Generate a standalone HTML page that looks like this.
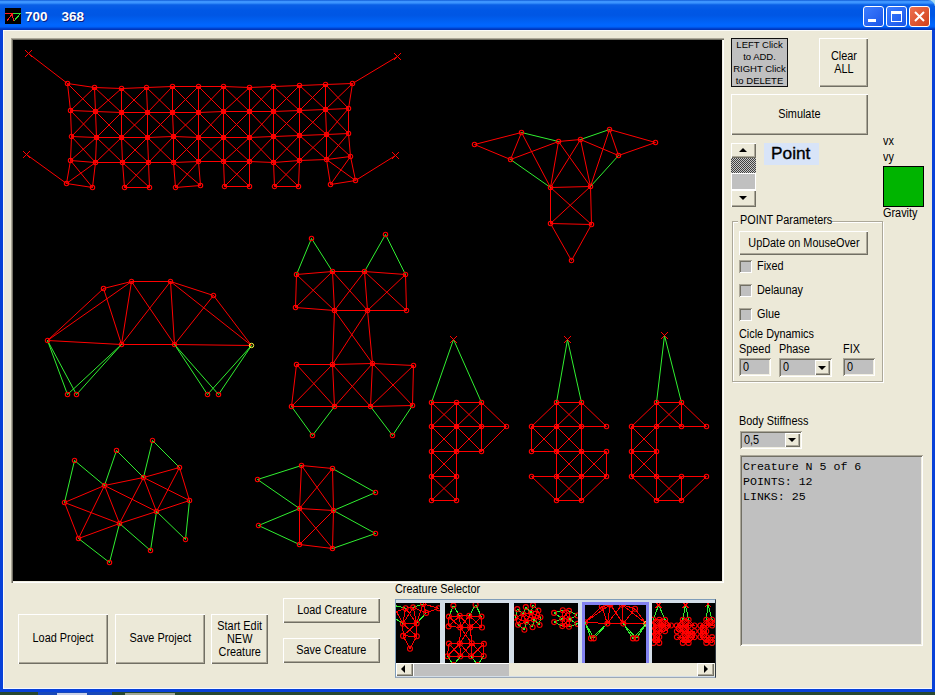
<!DOCTYPE html>
<html><head><meta charset="utf-8">
<style>
*{margin:0;padding:0;box-sizing:border-box}
html,body{width:935px;height:695px;overflow:hidden;background:#27472f}
body{position:relative;font-family:"Liberation Sans",sans-serif;font-size:12px;color:#000}
.a{position:absolute}
#win{left:0;top:0;width:935px;height:692px;background:#0841d8;border-radius:0 7px 0 0}
#title{left:0;top:0;width:935px;height:30px;border-radius:0 7px 0 0;
background:linear-gradient(to bottom,#0047c8 0px,#3d95ff 1px,#3d95ff 3px,#1a74f0 4px,#0a5fe6 5px,#0058e6 10px,#0056e4 15px,#005ff0 20px,#0066ff 25px,#0062f8 27px,#0048d8 28px,#0030b0 30px)}
#ttxt{left:25px;top:9px;color:#fff;font-weight:bold;font-size:13.5px;line-height:15px;text-shadow:1px 1px #0a1e80;white-space:nowrap}
#client{left:3px;top:30px;width:929px;height:659px;background:#ECE9D8;border-top:1px solid #fbfbf8;border-left:1px solid #fbfbf8;border-bottom:1px solid #f5f8ff}
.btn{position:absolute;background:#ECE9D8;box-shadow:inset 1px 1px #fff,inset -1px -1px #716F64,inset -2px -2px #ACA899;display:flex;align-items:center;justify-content:center;text-align:center;line-height:13px;font-size:12.5px;padding-bottom:1px}
.btn span{display:inline-block;transform:scaleX(.87);white-space:nowrap}
.tb{position:absolute;width:21px;height:21px;border-radius:3px;border:1px solid #fff}
.lbl{position:absolute;white-space:nowrap;font-size:12.5px;line-height:14px;transform:scaleX(.87);transform-origin:0 0}
.chk{position:absolute;width:13px;height:13px;background:#c0c0c0;box-shadow:inset 1px 1px #ACA899,inset -1px -1px #fff,inset 2px 2px #716F64}
.txt{position:absolute;background:#c0c0c0;box-shadow:inset 1px 1px #ACA899,inset -1px -1px #fff,inset 2px 2px #716F64,inset -2px -2px #F1EFE2;font-size:12.5px;padding:3px 0 0 4px;line-height:13px}
.txt span{display:inline-block;transform:scaleX(.87);transform-origin:0 0}
.arr{position:absolute;width:0;height:0;border-left:4px solid transparent;border-right:4px solid transparent}
</style></head><body>
<div class="a" style="left:38px;top:692px;width:74px;height:3px;background:#1848b8"></div><div class="a" style="left:57px;top:693px;width:30px;height:2px;background:#c8d0e8"></div><div class="a" style="left:125px;top:693px;width:50px;height:2px;background:#a0a898"></div>
<div id="win" class="a"></div>
<div class="a" style="left:928px;top:0;width:7px;height:6px;background:#a8dcf0"></div>
<div id="title" class="a"></div>
<svg class="a" style="left:5px;top:8px" width="16" height="16" viewBox="0 0 16 16" shape-rendering="crispEdges"><rect width="16" height="16" fill="#000"/><path d="M0 5.5H8M1.5 13.5L7.5 5.5L8.5 13.5" stroke="#ff2020" stroke-width="1" fill="none"/><path d="M8 5.5H15.5L8.5 13.5" stroke="#30e030" stroke-width="1" fill="none"/></svg>
<div id="ttxt" class="a">700<span style="display:inline-block;width:14px"></span>368</div>
<div class="tb a" style="left:863px;top:6px;background:linear-gradient(135deg,#3c7dff,#1a55e8)"><div class="a" style="left:4px;top:12px;width:8px;height:3px;background:#fff"></div></div>
<div class="tb a" style="left:886px;top:6px;background:linear-gradient(135deg,#3c7dff,#1a55e8)"><div class="a" style="left:4px;top:4px;width:11px;height:11px;border:1px solid #fff;border-top:3px solid #fff"></div></div>
<div class="tb a" style="left:909px;top:6px;background:linear-gradient(135deg,#ee7050,#d0401a)"><svg class="a" style="left:3px;top:3px" width="13" height="13"><path d="M2 2 L11 11 M11 2 L2 11" stroke="#fff" stroke-width="2"/></svg></div>
<div id="client" class="a"></div>

<!-- canvas -->
<div class="a" style="left:11px;top:38px;width:713px;height:545px;background:#000;box-shadow:inset 1px 1px #ACA899,inset 2px 2px #716F64,inset -1px -1px #fff,inset -2px -2px #F1EFE2"></div>
<svg class="a" id="cv" style="left:13px;top:40px" width="709" height="541" viewBox="13 40 709 541" shape-rendering="auto"><!--MAIN-->
<path d="M67.5 83.5L94.5 87.5M94.5 87.5L121.5 88.5M121.5 88.5L146.5 87.5M146.5 87.5L172.5 86.5M172.5 86.5L198.5 86.5M198.5 86.5L223.5 86.5M223.5 86.5L249.5 87.5M249.5 87.5L273.5 86.5M273.5 86.5L299.5 85.5M299.5 85.5L325.5 84.5M325.5 84.5L352.5 83.5M70.5 110.5L95.5 111.5M95.5 111.5L121.5 112.5M121.5 112.5L147.5 112.5M147.5 112.5L172.5 112.5M172.5 112.5L198.5 112.5M198.5 112.5L223.5 111.5M223.5 111.5L249.5 111.5M249.5 111.5L273.5 111.5M273.5 111.5L299.5 110.5M299.5 110.5L325.5 109.5M325.5 109.5L348.5 108.5M71.5 136.5L96.5 137.5M96.5 137.5L121.5 137.5M121.5 137.5L147.5 137.5M147.5 137.5L173.5 136.5M173.5 136.5L198.5 137.5M198.5 137.5L223.5 137.5M223.5 137.5L249.5 137.5M249.5 137.5L273.5 136.5M273.5 136.5L299.5 135.5M299.5 135.5L326.5 134.5M326.5 134.5L348.5 133.5M70.5 160.5L95.5 162.5M95.5 162.5L122.5 162.5M122.5 162.5L148.5 162.5M148.5 162.5L173.5 162.5M173.5 162.5L198.5 161.5M198.5 161.5L223.5 161.5M223.5 161.5L249.5 161.5M249.5 161.5L273.5 162.5M273.5 162.5L299.5 160.5M299.5 160.5L326.5 159.5M326.5 159.5L350.5 156.5M67.5 83.5L70.5 110.5M94.5 87.5L95.5 111.5M121.5 88.5L121.5 112.5M146.5 87.5L147.5 112.5M172.5 86.5L172.5 112.5M198.5 86.5L198.5 112.5M223.5 86.5L223.5 111.5M249.5 87.5L249.5 111.5M273.5 86.5L273.5 111.5M299.5 85.5L299.5 110.5M325.5 84.5L325.5 109.5M352.5 83.5L348.5 108.5M67.5 83.5L95.5 111.5M94.5 87.5L70.5 110.5M94.5 87.5L121.5 112.5M121.5 88.5L95.5 111.5M121.5 88.5L147.5 112.5M146.5 87.5L121.5 112.5M146.5 87.5L172.5 112.5M172.5 86.5L147.5 112.5M172.5 86.5L198.5 112.5M198.5 86.5L172.5 112.5M198.5 86.5L223.5 111.5M223.5 86.5L198.5 112.5M223.5 86.5L249.5 111.5M249.5 87.5L223.5 111.5M249.5 87.5L273.5 111.5M273.5 86.5L249.5 111.5M273.5 86.5L299.5 110.5M299.5 85.5L273.5 111.5M299.5 85.5L325.5 109.5M325.5 84.5L299.5 110.5M325.5 84.5L348.5 108.5M352.5 83.5L325.5 109.5M70.5 110.5L71.5 136.5M95.5 111.5L96.5 137.5M121.5 112.5L121.5 137.5M147.5 112.5L147.5 137.5M172.5 112.5L173.5 136.5M198.5 112.5L198.5 137.5M223.5 111.5L223.5 137.5M249.5 111.5L249.5 137.5M273.5 111.5L273.5 136.5M299.5 110.5L299.5 135.5M325.5 109.5L326.5 134.5M348.5 108.5L348.5 133.5M70.5 110.5L96.5 137.5M95.5 111.5L71.5 136.5M95.5 111.5L121.5 137.5M121.5 112.5L96.5 137.5M121.5 112.5L147.5 137.5M147.5 112.5L121.5 137.5M147.5 112.5L173.5 136.5M172.5 112.5L147.5 137.5M172.5 112.5L198.5 137.5M198.5 112.5L173.5 136.5M198.5 112.5L223.5 137.5M223.5 111.5L198.5 137.5M223.5 111.5L249.5 137.5M249.5 111.5L223.5 137.5M249.5 111.5L273.5 136.5M273.5 111.5L249.5 137.5M273.5 111.5L299.5 135.5M299.5 110.5L273.5 136.5M299.5 110.5L326.5 134.5M325.5 109.5L299.5 135.5M325.5 109.5L348.5 133.5M348.5 108.5L326.5 134.5M71.5 136.5L70.5 160.5M96.5 137.5L95.5 162.5M121.5 137.5L122.5 162.5M147.5 137.5L148.5 162.5M173.5 136.5L173.5 162.5M198.5 137.5L198.5 161.5M223.5 137.5L223.5 161.5M249.5 137.5L249.5 161.5M273.5 136.5L273.5 162.5M299.5 135.5L299.5 160.5M326.5 134.5L326.5 159.5M348.5 133.5L350.5 156.5M71.5 136.5L95.5 162.5M96.5 137.5L70.5 160.5M96.5 137.5L122.5 162.5M121.5 137.5L95.5 162.5M121.5 137.5L148.5 162.5M147.5 137.5L122.5 162.5M147.5 137.5L173.5 162.5M173.5 136.5L148.5 162.5M173.5 136.5L198.5 161.5M198.5 137.5L173.5 162.5M198.5 137.5L223.5 161.5M223.5 137.5L198.5 161.5M223.5 137.5L249.5 161.5M249.5 137.5L223.5 161.5M249.5 137.5L273.5 162.5M273.5 136.5L249.5 161.5M273.5 136.5L299.5 160.5M299.5 135.5L273.5 162.5M299.5 135.5L326.5 159.5M326.5 134.5L299.5 160.5M326.5 134.5L350.5 156.5M348.5 133.5L326.5 159.5M70.5 160.5L66.5 183.5M95.5 162.5L92.5 187.5M66.5 183.5L92.5 187.5M70.5 160.5L92.5 187.5M95.5 162.5L66.5 183.5M122.5 162.5L124.5 187.5M148.5 162.5L149.5 187.5M124.5 187.5L149.5 187.5M122.5 162.5L149.5 187.5M148.5 162.5L124.5 187.5M173.5 162.5L175.5 187.5M198.5 161.5L200.5 185.5M175.5 187.5L200.5 185.5M173.5 162.5L200.5 185.5M198.5 161.5L175.5 187.5M223.5 161.5L224.5 186.5M249.5 161.5L249.5 186.5M224.5 186.5L249.5 186.5M223.5 161.5L249.5 186.5M249.5 161.5L224.5 186.5M273.5 162.5L274.5 186.5M299.5 160.5L298.5 186.5M274.5 186.5L298.5 186.5M273.5 162.5L298.5 186.5M299.5 160.5L274.5 186.5M326.5 159.5L330.5 184.5M350.5 156.5L355.5 180.5M330.5 184.5L355.5 180.5M326.5 159.5L355.5 180.5M350.5 156.5L330.5 184.5M28.5 53.5L67.5 83.5M26.5 154.5L66.5 183.5M397.5 56.5L352.5 83.5M395.5 155.5L355.5 180.5" stroke="#ff0000" stroke-width="1" fill="none"/>
<path d="M65.3 83.5a2.2 2.2 0 1 0 4.4 0a2.2 2.2 0 1 0 -4.4 0M68.3 110.5a2.2 2.2 0 1 0 4.4 0a2.2 2.2 0 1 0 -4.4 0M69.3 136.5a2.2 2.2 0 1 0 4.4 0a2.2 2.2 0 1 0 -4.4 0M68.3 160.5a2.2 2.2 0 1 0 4.4 0a2.2 2.2 0 1 0 -4.4 0M64.3 183.5a2.2 2.2 0 1 0 4.4 0a2.2 2.2 0 1 0 -4.4 0M92.3 87.5a2.2 2.2 0 1 0 4.4 0a2.2 2.2 0 1 0 -4.4 0M93.3 111.5a2.2 2.2 0 1 0 4.4 0a2.2 2.2 0 1 0 -4.4 0M94.3 137.5a2.2 2.2 0 1 0 4.4 0a2.2 2.2 0 1 0 -4.4 0M93.3 162.5a2.2 2.2 0 1 0 4.4 0a2.2 2.2 0 1 0 -4.4 0M90.3 187.5a2.2 2.2 0 1 0 4.4 0a2.2 2.2 0 1 0 -4.4 0M119.3 88.5a2.2 2.2 0 1 0 4.4 0a2.2 2.2 0 1 0 -4.4 0M119.3 112.5a2.2 2.2 0 1 0 4.4 0a2.2 2.2 0 1 0 -4.4 0M119.3 137.5a2.2 2.2 0 1 0 4.4 0a2.2 2.2 0 1 0 -4.4 0M120.3 162.5a2.2 2.2 0 1 0 4.4 0a2.2 2.2 0 1 0 -4.4 0M122.3 187.5a2.2 2.2 0 1 0 4.4 0a2.2 2.2 0 1 0 -4.4 0M144.3 87.5a2.2 2.2 0 1 0 4.4 0a2.2 2.2 0 1 0 -4.4 0M145.3 112.5a2.2 2.2 0 1 0 4.4 0a2.2 2.2 0 1 0 -4.4 0M145.3 137.5a2.2 2.2 0 1 0 4.4 0a2.2 2.2 0 1 0 -4.4 0M146.3 162.5a2.2 2.2 0 1 0 4.4 0a2.2 2.2 0 1 0 -4.4 0M147.3 187.5a2.2 2.2 0 1 0 4.4 0a2.2 2.2 0 1 0 -4.4 0M170.3 86.5a2.2 2.2 0 1 0 4.4 0a2.2 2.2 0 1 0 -4.4 0M170.3 112.5a2.2 2.2 0 1 0 4.4 0a2.2 2.2 0 1 0 -4.4 0M171.3 136.5a2.2 2.2 0 1 0 4.4 0a2.2 2.2 0 1 0 -4.4 0M171.3 162.5a2.2 2.2 0 1 0 4.4 0a2.2 2.2 0 1 0 -4.4 0M173.3 187.5a2.2 2.2 0 1 0 4.4 0a2.2 2.2 0 1 0 -4.4 0M196.3 86.5a2.2 2.2 0 1 0 4.4 0a2.2 2.2 0 1 0 -4.4 0M196.3 112.5a2.2 2.2 0 1 0 4.4 0a2.2 2.2 0 1 0 -4.4 0M196.3 137.5a2.2 2.2 0 1 0 4.4 0a2.2 2.2 0 1 0 -4.4 0M196.3 161.5a2.2 2.2 0 1 0 4.4 0a2.2 2.2 0 1 0 -4.4 0M198.3 185.5a2.2 2.2 0 1 0 4.4 0a2.2 2.2 0 1 0 -4.4 0M221.3 86.5a2.2 2.2 0 1 0 4.4 0a2.2 2.2 0 1 0 -4.4 0M221.3 111.5a2.2 2.2 0 1 0 4.4 0a2.2 2.2 0 1 0 -4.4 0M221.3 137.5a2.2 2.2 0 1 0 4.4 0a2.2 2.2 0 1 0 -4.4 0M221.3 161.5a2.2 2.2 0 1 0 4.4 0a2.2 2.2 0 1 0 -4.4 0M222.3 186.5a2.2 2.2 0 1 0 4.4 0a2.2 2.2 0 1 0 -4.4 0M247.3 87.5a2.2 2.2 0 1 0 4.4 0a2.2 2.2 0 1 0 -4.4 0M247.3 111.5a2.2 2.2 0 1 0 4.4 0a2.2 2.2 0 1 0 -4.4 0M247.3 137.5a2.2 2.2 0 1 0 4.4 0a2.2 2.2 0 1 0 -4.4 0M247.3 161.5a2.2 2.2 0 1 0 4.4 0a2.2 2.2 0 1 0 -4.4 0M247.3 186.5a2.2 2.2 0 1 0 4.4 0a2.2 2.2 0 1 0 -4.4 0M271.3 86.5a2.2 2.2 0 1 0 4.4 0a2.2 2.2 0 1 0 -4.4 0M271.3 111.5a2.2 2.2 0 1 0 4.4 0a2.2 2.2 0 1 0 -4.4 0M271.3 136.5a2.2 2.2 0 1 0 4.4 0a2.2 2.2 0 1 0 -4.4 0M271.3 162.5a2.2 2.2 0 1 0 4.4 0a2.2 2.2 0 1 0 -4.4 0M272.3 186.5a2.2 2.2 0 1 0 4.4 0a2.2 2.2 0 1 0 -4.4 0M297.3 85.5a2.2 2.2 0 1 0 4.4 0a2.2 2.2 0 1 0 -4.4 0M297.3 110.5a2.2 2.2 0 1 0 4.4 0a2.2 2.2 0 1 0 -4.4 0M297.3 135.5a2.2 2.2 0 1 0 4.4 0a2.2 2.2 0 1 0 -4.4 0M297.3 160.5a2.2 2.2 0 1 0 4.4 0a2.2 2.2 0 1 0 -4.4 0M296.3 186.5a2.2 2.2 0 1 0 4.4 0a2.2 2.2 0 1 0 -4.4 0M323.3 84.5a2.2 2.2 0 1 0 4.4 0a2.2 2.2 0 1 0 -4.4 0M323.3 109.5a2.2 2.2 0 1 0 4.4 0a2.2 2.2 0 1 0 -4.4 0M324.3 134.5a2.2 2.2 0 1 0 4.4 0a2.2 2.2 0 1 0 -4.4 0M324.3 159.5a2.2 2.2 0 1 0 4.4 0a2.2 2.2 0 1 0 -4.4 0M328.3 184.5a2.2 2.2 0 1 0 4.4 0a2.2 2.2 0 1 0 -4.4 0M350.3 83.5a2.2 2.2 0 1 0 4.4 0a2.2 2.2 0 1 0 -4.4 0M346.3 108.5a2.2 2.2 0 1 0 4.4 0a2.2 2.2 0 1 0 -4.4 0M346.3 133.5a2.2 2.2 0 1 0 4.4 0a2.2 2.2 0 1 0 -4.4 0M348.3 156.5a2.2 2.2 0 1 0 4.4 0a2.2 2.2 0 1 0 -4.4 0M353.3 180.5a2.2 2.2 0 1 0 4.4 0a2.2 2.2 0 1 0 -4.4 0" stroke="#ff0000" stroke-width="1.1" fill="none" shape-rendering="auto"/>
<path d="M25 50l7 7M25 57l7 -7M23 151l7 7M23 158l7 -7M394 53l7 7M394 60l7 -7M392 152l7 7M392 159l7 -7" stroke="#ff0000" stroke-width="1" fill="none"/>
<path d="M474.5 144.5L521.5 132.5M474.5 144.5L510.5 159.5M521.5 132.5L510.5 159.5M521.5 132.5L550.5 187.5M510.5 159.5L558.5 141.5M558.5 141.5L580.5 139.5M558.5 141.5L550.5 187.5M558.5 141.5L590.5 186.5M580.5 139.5L550.5 187.5M580.5 139.5L590.5 186.5M580.5 139.5L618.5 155.5M609.5 129.5L655.5 142.5M609.5 129.5L618.5 155.5M655.5 142.5L618.5 155.5M609.5 129.5L590.5 186.5M550.5 187.5L590.5 186.5M550.5 187.5L550.5 223.5M590.5 186.5L591.5 224.5M550.5 187.5L591.5 224.5M590.5 186.5L550.5 223.5M550.5 223.5L591.5 224.5M550.5 223.5L571.5 260.5M591.5 224.5L571.5 260.5" stroke="#ff0000" stroke-width="1" fill="none"/>
<path d="M521.5 132.5L558.5 141.5M510.5 159.5L550.5 187.5M580.5 139.5L609.5 129.5M618.5 155.5L590.5 186.5" stroke="#30f030" stroke-width="1" fill="none"/>
<path d="M472.3 144.5a2.2 2.2 0 1 0 4.4 0a2.2 2.2 0 1 0 -4.4 0M519.3 132.5a2.2 2.2 0 1 0 4.4 0a2.2 2.2 0 1 0 -4.4 0M508.3 159.5a2.2 2.2 0 1 0 4.4 0a2.2 2.2 0 1 0 -4.4 0M556.3 141.5a2.2 2.2 0 1 0 4.4 0a2.2 2.2 0 1 0 -4.4 0M578.3 139.5a2.2 2.2 0 1 0 4.4 0a2.2 2.2 0 1 0 -4.4 0M607.3 129.5a2.2 2.2 0 1 0 4.4 0a2.2 2.2 0 1 0 -4.4 0M653.3 142.5a2.2 2.2 0 1 0 4.4 0a2.2 2.2 0 1 0 -4.4 0M616.3 155.5a2.2 2.2 0 1 0 4.4 0a2.2 2.2 0 1 0 -4.4 0M548.3 187.5a2.2 2.2 0 1 0 4.4 0a2.2 2.2 0 1 0 -4.4 0M588.3 186.5a2.2 2.2 0 1 0 4.4 0a2.2 2.2 0 1 0 -4.4 0M548.3 223.5a2.2 2.2 0 1 0 4.4 0a2.2 2.2 0 1 0 -4.4 0M589.3 224.5a2.2 2.2 0 1 0 4.4 0a2.2 2.2 0 1 0 -4.4 0M569.3 260.5a2.2 2.2 0 1 0 4.4 0a2.2 2.2 0 1 0 -4.4 0" stroke="#ff0000" stroke-width="1.1" fill="none" shape-rendering="auto"/>
<path d="M47.5 340.5L103.5 288.5M47.5 340.5L131.5 281.5M103.5 288.5L131.5 281.5M103.5 288.5L121.5 344.5M131.5 281.5L170.5 281.5M131.5 281.5L121.5 344.5M131.5 281.5L174.5 344.5M170.5 281.5L121.5 344.5M170.5 281.5L174.5 344.5M170.5 281.5L213.5 295.5M170.5 281.5L251.5 345.5M213.5 295.5L174.5 344.5M213.5 295.5L251.5 345.5M47.5 340.5L121.5 344.5M121.5 344.5L174.5 344.5M174.5 344.5L251.5 345.5" stroke="#ff0000" stroke-width="1" fill="none"/>
<path d="M47.5 340.5L67.5 394.5M47.5 340.5L76.5 394.5M121.5 344.5L67.5 394.5M121.5 344.5L76.5 394.5M174.5 344.5L207.5 394.5M174.5 344.5L218.5 394.5M251.5 345.5L207.5 394.5M251.5 345.5L218.5 394.5" stroke="#30f030" stroke-width="1" fill="none"/>
<path d="M45.3 340.5a2.2 2.2 0 1 0 4.4 0a2.2 2.2 0 1 0 -4.4 0M101.3 288.5a2.2 2.2 0 1 0 4.4 0a2.2 2.2 0 1 0 -4.4 0M129.3 281.5a2.2 2.2 0 1 0 4.4 0a2.2 2.2 0 1 0 -4.4 0M168.3 281.5a2.2 2.2 0 1 0 4.4 0a2.2 2.2 0 1 0 -4.4 0M211.3 295.5a2.2 2.2 0 1 0 4.4 0a2.2 2.2 0 1 0 -4.4 0M119.3 344.5a2.2 2.2 0 1 0 4.4 0a2.2 2.2 0 1 0 -4.4 0M172.3 344.5a2.2 2.2 0 1 0 4.4 0a2.2 2.2 0 1 0 -4.4 0M65.3 394.5a2.2 2.2 0 1 0 4.4 0a2.2 2.2 0 1 0 -4.4 0M74.3 394.5a2.2 2.2 0 1 0 4.4 0a2.2 2.2 0 1 0 -4.4 0M205.3 394.5a2.2 2.2 0 1 0 4.4 0a2.2 2.2 0 1 0 -4.4 0M216.3 394.5a2.2 2.2 0 1 0 4.4 0a2.2 2.2 0 1 0 -4.4 0" stroke="#ff0000" stroke-width="1.1" fill="none" shape-rendering="auto"/>
<circle cx="251.5" cy="345.5" r="2.2" stroke="#ffff40" fill="none" shape-rendering="auto"/>
<path d="M296.5 274.5L332.5 271.5M332.5 271.5L364.5 271.5M364.5 271.5L405.5 274.5M296.5 274.5L295.5 307.5M332.5 271.5L334.5 310.5M364.5 271.5L367.5 310.5M405.5 274.5L406.5 310.5M295.5 307.5L334.5 310.5M334.5 310.5L367.5 310.5M367.5 310.5L406.5 310.5M296.5 274.5L334.5 310.5M332.5 271.5L295.5 307.5M332.5 271.5L367.5 310.5M364.5 271.5L334.5 310.5M364.5 271.5L406.5 310.5M405.5 274.5L367.5 310.5M334.5 310.5L332.5 364.5M367.5 310.5L372.5 363.5M334.5 310.5L372.5 363.5M367.5 310.5L332.5 364.5M296.5 364.5L332.5 364.5M332.5 364.5L372.5 363.5M372.5 363.5L413.5 365.5M296.5 364.5L291.5 406.5M332.5 364.5L334.5 406.5M372.5 363.5L370.5 406.5M413.5 365.5L412.5 405.5M291.5 406.5L334.5 406.5M334.5 406.5L370.5 406.5M370.5 406.5L412.5 405.5M296.5 364.5L334.5 406.5M332.5 364.5L291.5 406.5M332.5 364.5L370.5 406.5M372.5 363.5L334.5 406.5M372.5 363.5L412.5 405.5M413.5 365.5L370.5 406.5" stroke="#ff0000" stroke-width="1" fill="none"/>
<path d="M311.5 238.5L296.5 274.5M311.5 238.5L332.5 271.5M385.5 234.5L364.5 271.5M385.5 234.5L405.5 274.5M291.5 406.5L312.5 435.5M334.5 406.5L312.5 435.5M370.5 406.5L392.5 435.5M412.5 405.5L392.5 435.5" stroke="#30f030" stroke-width="1" fill="none"/>
<path d="M309.3 238.5a2.2 2.2 0 1 0 4.4 0a2.2 2.2 0 1 0 -4.4 0M383.3 234.5a2.2 2.2 0 1 0 4.4 0a2.2 2.2 0 1 0 -4.4 0M294.3 274.5a2.2 2.2 0 1 0 4.4 0a2.2 2.2 0 1 0 -4.4 0M330.3 271.5a2.2 2.2 0 1 0 4.4 0a2.2 2.2 0 1 0 -4.4 0M362.3 271.5a2.2 2.2 0 1 0 4.4 0a2.2 2.2 0 1 0 -4.4 0M403.3 274.5a2.2 2.2 0 1 0 4.4 0a2.2 2.2 0 1 0 -4.4 0M293.3 307.5a2.2 2.2 0 1 0 4.4 0a2.2 2.2 0 1 0 -4.4 0M332.3 310.5a2.2 2.2 0 1 0 4.4 0a2.2 2.2 0 1 0 -4.4 0M365.3 310.5a2.2 2.2 0 1 0 4.4 0a2.2 2.2 0 1 0 -4.4 0M404.3 310.5a2.2 2.2 0 1 0 4.4 0a2.2 2.2 0 1 0 -4.4 0M294.3 364.5a2.2 2.2 0 1 0 4.4 0a2.2 2.2 0 1 0 -4.4 0M330.3 364.5a2.2 2.2 0 1 0 4.4 0a2.2 2.2 0 1 0 -4.4 0M370.3 363.5a2.2 2.2 0 1 0 4.4 0a2.2 2.2 0 1 0 -4.4 0M411.3 365.5a2.2 2.2 0 1 0 4.4 0a2.2 2.2 0 1 0 -4.4 0M289.3 406.5a2.2 2.2 0 1 0 4.4 0a2.2 2.2 0 1 0 -4.4 0M332.3 406.5a2.2 2.2 0 1 0 4.4 0a2.2 2.2 0 1 0 -4.4 0M368.3 406.5a2.2 2.2 0 1 0 4.4 0a2.2 2.2 0 1 0 -4.4 0M410.3 405.5a2.2 2.2 0 1 0 4.4 0a2.2 2.2 0 1 0 -4.4 0M310.3 435.5a2.2 2.2 0 1 0 4.4 0a2.2 2.2 0 1 0 -4.4 0M390.3 435.5a2.2 2.2 0 1 0 4.4 0a2.2 2.2 0 1 0 -4.4 0" stroke="#ff0000" stroke-width="1.1" fill="none" shape-rendering="auto"/>
<path d="M64.5 502.5L104.5 485.5M104.5 485.5L143.5 477.5M143.5 477.5L179.5 467.5M179.5 467.5L189.5 500.5M189.5 500.5L156.5 511.5M156.5 511.5L119.5 523.5M119.5 523.5L78.5 538.5M78.5 538.5L64.5 502.5M64.5 502.5L119.5 523.5M104.5 485.5L78.5 538.5M104.5 485.5L119.5 523.5M104.5 485.5L156.5 511.5M143.5 477.5L119.5 523.5M143.5 477.5L156.5 511.5M143.5 477.5L189.5 500.5M179.5 467.5L156.5 511.5M301.5 465.5L332.5 468.5M301.5 465.5L299.5 508.5M332.5 468.5L333.5 510.5M299.5 508.5L333.5 510.5M299.5 508.5L299.5 544.5M333.5 510.5L332.5 548.5M299.5 544.5L332.5 548.5M301.5 465.5L333.5 510.5M332.5 468.5L299.5 508.5M299.5 508.5L332.5 548.5M333.5 510.5L299.5 544.5" stroke="#ff0000" stroke-width="1" fill="none"/>
<path d="M74.5 460.5L64.5 502.5M74.5 460.5L104.5 485.5M116.5 450.5L104.5 485.5M116.5 450.5L143.5 477.5M152.5 440.5L143.5 477.5M152.5 440.5L179.5 467.5M78.5 538.5L109.5 562.5M119.5 523.5L109.5 562.5M119.5 523.5L150.5 550.5M156.5 511.5L150.5 550.5M156.5 511.5L185.5 539.5M189.5 500.5L185.5 539.5M257.5 479.5L301.5 465.5M257.5 479.5L299.5 508.5M258.5 525.5L299.5 508.5M258.5 525.5L299.5 544.5M375.5 492.5L332.5 468.5M375.5 492.5L333.5 510.5M375.5 533.5L333.5 510.5M375.5 533.5L332.5 548.5" stroke="#30f030" stroke-width="1" fill="none"/>
<path d="M72.3 460.5a2.2 2.2 0 1 0 4.4 0a2.2 2.2 0 1 0 -4.4 0M114.3 450.5a2.2 2.2 0 1 0 4.4 0a2.2 2.2 0 1 0 -4.4 0M150.3 440.5a2.2 2.2 0 1 0 4.4 0a2.2 2.2 0 1 0 -4.4 0M62.3 502.5a2.2 2.2 0 1 0 4.4 0a2.2 2.2 0 1 0 -4.4 0M102.3 485.5a2.2 2.2 0 1 0 4.4 0a2.2 2.2 0 1 0 -4.4 0M141.3 477.5a2.2 2.2 0 1 0 4.4 0a2.2 2.2 0 1 0 -4.4 0M177.3 467.5a2.2 2.2 0 1 0 4.4 0a2.2 2.2 0 1 0 -4.4 0M187.3 500.5a2.2 2.2 0 1 0 4.4 0a2.2 2.2 0 1 0 -4.4 0M154.3 511.5a2.2 2.2 0 1 0 4.4 0a2.2 2.2 0 1 0 -4.4 0M117.3 523.5a2.2 2.2 0 1 0 4.4 0a2.2 2.2 0 1 0 -4.4 0M76.3 538.5a2.2 2.2 0 1 0 4.4 0a2.2 2.2 0 1 0 -4.4 0M107.3 562.5a2.2 2.2 0 1 0 4.4 0a2.2 2.2 0 1 0 -4.4 0M148.3 550.5a2.2 2.2 0 1 0 4.4 0a2.2 2.2 0 1 0 -4.4 0M183.3 539.5a2.2 2.2 0 1 0 4.4 0a2.2 2.2 0 1 0 -4.4 0M299.3 465.5a2.2 2.2 0 1 0 4.4 0a2.2 2.2 0 1 0 -4.4 0M330.3 468.5a2.2 2.2 0 1 0 4.4 0a2.2 2.2 0 1 0 -4.4 0M297.3 508.5a2.2 2.2 0 1 0 4.4 0a2.2 2.2 0 1 0 -4.4 0M331.3 510.5a2.2 2.2 0 1 0 4.4 0a2.2 2.2 0 1 0 -4.4 0M297.3 544.5a2.2 2.2 0 1 0 4.4 0a2.2 2.2 0 1 0 -4.4 0M330.3 548.5a2.2 2.2 0 1 0 4.4 0a2.2 2.2 0 1 0 -4.4 0M255.3 479.5a2.2 2.2 0 1 0 4.4 0a2.2 2.2 0 1 0 -4.4 0M256.3 525.5a2.2 2.2 0 1 0 4.4 0a2.2 2.2 0 1 0 -4.4 0M373.3 492.5a2.2 2.2 0 1 0 4.4 0a2.2 2.2 0 1 0 -4.4 0M373.3 533.5a2.2 2.2 0 1 0 4.4 0a2.2 2.2 0 1 0 -4.4 0" stroke="#ff0000" stroke-width="1.1" fill="none" shape-rendering="auto"/>
<path d="M431.5 402.5L456.5 402.5M431.5 426.5L456.5 426.5M431.5 402.5L431.5 426.5M456.5 402.5L456.5 426.5M431.5 402.5L456.5 426.5M456.5 402.5L431.5 426.5M456.5 402.5L481.5 402.5M456.5 426.5L481.5 426.5M456.5 402.5L456.5 426.5M481.5 402.5L481.5 426.5M456.5 402.5L481.5 426.5M481.5 402.5L456.5 426.5M431.5 426.5L456.5 426.5M431.5 451.5L456.5 451.5M431.5 426.5L431.5 451.5M456.5 426.5L456.5 451.5M431.5 426.5L456.5 451.5M456.5 426.5L431.5 451.5M456.5 426.5L481.5 426.5M456.5 451.5L481.5 451.5M456.5 426.5L456.5 451.5M481.5 426.5L481.5 451.5M456.5 426.5L481.5 451.5M481.5 426.5L456.5 451.5M431.5 451.5L456.5 451.5M431.5 476.5L456.5 476.5M431.5 451.5L431.5 476.5M456.5 451.5L456.5 476.5M431.5 451.5L456.5 476.5M456.5 451.5L431.5 476.5M431.5 476.5L456.5 476.5M431.5 500.5L456.5 500.5M431.5 476.5L431.5 500.5M456.5 476.5L456.5 500.5M431.5 476.5L456.5 500.5M456.5 476.5L431.5 500.5M481.5 402.5L506.5 426.5M481.5 426.5L506.5 426.5M481.5 451.5L506.5 426.5M556.5 402.5L581.5 402.5M556.5 426.5L581.5 426.5M556.5 402.5L556.5 426.5M581.5 402.5L581.5 426.5M556.5 402.5L581.5 426.5M581.5 402.5L556.5 426.5M531.5 426.5L556.5 426.5M531.5 451.5L556.5 451.5M531.5 426.5L531.5 451.5M556.5 426.5L556.5 451.5M531.5 426.5L556.5 451.5M556.5 426.5L531.5 451.5M556.5 426.5L581.5 426.5M556.5 451.5L581.5 451.5M556.5 426.5L556.5 451.5M581.5 426.5L581.5 451.5M556.5 426.5L581.5 451.5M581.5 426.5L556.5 451.5M581.5 426.5L606.5 426.5M556.5 451.5L581.5 451.5M556.5 476.5L581.5 476.5M556.5 451.5L556.5 476.5M581.5 451.5L581.5 476.5M556.5 451.5L581.5 476.5M581.5 451.5L556.5 476.5M581.5 451.5L606.5 451.5M581.5 476.5L606.5 476.5M606.5 451.5L606.5 476.5M581.5 451.5L606.5 476.5M606.5 451.5L581.5 476.5M556.5 476.5L581.5 476.5M556.5 500.5L581.5 500.5M556.5 476.5L556.5 500.5M581.5 476.5L581.5 500.5M556.5 476.5L581.5 500.5M581.5 476.5L556.5 500.5M531.5 476.5L556.5 476.5M531.5 426.5L556.5 402.5M606.5 426.5L581.5 402.5M531.5 476.5L556.5 500.5M606.5 476.5L581.5 500.5M656.5 402.5L681.5 402.5M656.5 426.5L681.5 426.5M656.5 402.5L656.5 426.5M681.5 402.5L681.5 426.5M656.5 402.5L681.5 426.5M681.5 402.5L656.5 426.5M631.5 426.5L656.5 426.5M631.5 451.5L656.5 451.5M631.5 426.5L631.5 451.5M656.5 426.5L656.5 451.5M631.5 426.5L656.5 451.5M656.5 426.5L631.5 451.5M656.5 426.5L681.5 426.5M681.5 426.5L706.5 426.5M631.5 451.5L656.5 451.5M631.5 476.5L656.5 476.5M631.5 451.5L631.5 476.5M656.5 451.5L656.5 476.5M631.5 451.5L656.5 476.5M656.5 451.5L631.5 476.5M656.5 476.5L681.5 476.5M656.5 500.5L681.5 500.5M656.5 476.5L656.5 500.5M681.5 476.5L681.5 500.5M656.5 476.5L681.5 500.5M681.5 476.5L656.5 500.5M681.5 476.5L706.5 476.5M631.5 426.5L656.5 402.5M681.5 402.5L706.5 426.5M631.5 476.5L656.5 500.5M706.5 476.5L681.5 500.5" stroke="#ff0000" stroke-width="1" fill="none"/>
<path d="M453.5 339.5L431.5 402.5M453.5 339.5L481.5 402.5M567.5 339.5L556.5 402.5M567.5 339.5L581.5 402.5M664.5 335.5L656.5 402.5M664.5 335.5L681.5 402.5" stroke="#30f030" stroke-width="1" fill="none"/>
<path d="M429.3 402.5a2.2 2.2 0 1 0 4.4 0a2.2 2.2 0 1 0 -4.4 0M454.3 402.5a2.2 2.2 0 1 0 4.4 0a2.2 2.2 0 1 0 -4.4 0M479.3 402.5a2.2 2.2 0 1 0 4.4 0a2.2 2.2 0 1 0 -4.4 0M429.3 426.5a2.2 2.2 0 1 0 4.4 0a2.2 2.2 0 1 0 -4.4 0M454.3 426.5a2.2 2.2 0 1 0 4.4 0a2.2 2.2 0 1 0 -4.4 0M479.3 426.5a2.2 2.2 0 1 0 4.4 0a2.2 2.2 0 1 0 -4.4 0M504.3 426.5a2.2 2.2 0 1 0 4.4 0a2.2 2.2 0 1 0 -4.4 0M429.3 451.5a2.2 2.2 0 1 0 4.4 0a2.2 2.2 0 1 0 -4.4 0M454.3 451.5a2.2 2.2 0 1 0 4.4 0a2.2 2.2 0 1 0 -4.4 0M479.3 451.5a2.2 2.2 0 1 0 4.4 0a2.2 2.2 0 1 0 -4.4 0M429.3 476.5a2.2 2.2 0 1 0 4.4 0a2.2 2.2 0 1 0 -4.4 0M454.3 476.5a2.2 2.2 0 1 0 4.4 0a2.2 2.2 0 1 0 -4.4 0M429.3 500.5a2.2 2.2 0 1 0 4.4 0a2.2 2.2 0 1 0 -4.4 0M454.3 500.5a2.2 2.2 0 1 0 4.4 0a2.2 2.2 0 1 0 -4.4 0M554.3 402.5a2.2 2.2 0 1 0 4.4 0a2.2 2.2 0 1 0 -4.4 0M579.3 402.5a2.2 2.2 0 1 0 4.4 0a2.2 2.2 0 1 0 -4.4 0M529.3 426.5a2.2 2.2 0 1 0 4.4 0a2.2 2.2 0 1 0 -4.4 0M554.3 426.5a2.2 2.2 0 1 0 4.4 0a2.2 2.2 0 1 0 -4.4 0M579.3 426.5a2.2 2.2 0 1 0 4.4 0a2.2 2.2 0 1 0 -4.4 0M604.3 426.5a2.2 2.2 0 1 0 4.4 0a2.2 2.2 0 1 0 -4.4 0M529.3 451.5a2.2 2.2 0 1 0 4.4 0a2.2 2.2 0 1 0 -4.4 0M554.3 451.5a2.2 2.2 0 1 0 4.4 0a2.2 2.2 0 1 0 -4.4 0M579.3 451.5a2.2 2.2 0 1 0 4.4 0a2.2 2.2 0 1 0 -4.4 0M604.3 451.5a2.2 2.2 0 1 0 4.4 0a2.2 2.2 0 1 0 -4.4 0M529.3 476.5a2.2 2.2 0 1 0 4.4 0a2.2 2.2 0 1 0 -4.4 0M554.3 476.5a2.2 2.2 0 1 0 4.4 0a2.2 2.2 0 1 0 -4.4 0M579.3 476.5a2.2 2.2 0 1 0 4.4 0a2.2 2.2 0 1 0 -4.4 0M604.3 476.5a2.2 2.2 0 1 0 4.4 0a2.2 2.2 0 1 0 -4.4 0M554.3 500.5a2.2 2.2 0 1 0 4.4 0a2.2 2.2 0 1 0 -4.4 0M579.3 500.5a2.2 2.2 0 1 0 4.4 0a2.2 2.2 0 1 0 -4.4 0M654.3 402.5a2.2 2.2 0 1 0 4.4 0a2.2 2.2 0 1 0 -4.4 0M679.3 402.5a2.2 2.2 0 1 0 4.4 0a2.2 2.2 0 1 0 -4.4 0M629.3 426.5a2.2 2.2 0 1 0 4.4 0a2.2 2.2 0 1 0 -4.4 0M654.3 426.5a2.2 2.2 0 1 0 4.4 0a2.2 2.2 0 1 0 -4.4 0M679.3 426.5a2.2 2.2 0 1 0 4.4 0a2.2 2.2 0 1 0 -4.4 0M704.3 426.5a2.2 2.2 0 1 0 4.4 0a2.2 2.2 0 1 0 -4.4 0M629.3 451.5a2.2 2.2 0 1 0 4.4 0a2.2 2.2 0 1 0 -4.4 0M654.3 451.5a2.2 2.2 0 1 0 4.4 0a2.2 2.2 0 1 0 -4.4 0M629.3 476.5a2.2 2.2 0 1 0 4.4 0a2.2 2.2 0 1 0 -4.4 0M654.3 476.5a2.2 2.2 0 1 0 4.4 0a2.2 2.2 0 1 0 -4.4 0M679.3 476.5a2.2 2.2 0 1 0 4.4 0a2.2 2.2 0 1 0 -4.4 0M704.3 476.5a2.2 2.2 0 1 0 4.4 0a2.2 2.2 0 1 0 -4.4 0M654.3 500.5a2.2 2.2 0 1 0 4.4 0a2.2 2.2 0 1 0 -4.4 0M679.3 500.5a2.2 2.2 0 1 0 4.4 0a2.2 2.2 0 1 0 -4.4 0" stroke="#ff0000" stroke-width="1.1" fill="none" shape-rendering="auto"/>
<path d="M450 336l7 7M450 343l7 -7M564 336l7 7M564 343l7 -7M661 332l7 7M661 339l7 -7" stroke="#ff0000" stroke-width="1" fill="none"/>
<!--/MAIN--></svg>

<!-- right panel -->
<div class="a" style="left:731px;top:38px;width:57px;height:49px;background:#c0c0c0;border:1px solid #101010;font-size:9.5px;line-height:12px;text-align:center;padding-top:0;white-space:nowrap">LEFT Click<br>to ADD.<br>RIGHT Click<br>to DELETE</div>
<div class="btn" style="left:819px;top:38px;width:49px;height:49px;padding:1px 0 0 0;line-height:13.5px"><span>Clear<br>ALL</span></div>
<div class="btn" style="left:731px;top:94px;width:137px;height:41px;padding-top:1px"><span>Simulate</span></div>

<!-- vscroll -->
<div class="a" style="left:731px;top:143px;width:25px;height:64px;background:#ECE9D8"></div>
<div class="btn" style="left:731px;top:143px;width:25px;height:15px"></div>
<div class="arr" style="left:739px;top:148px;border-bottom:4px solid #000"></div>
<div class="a" style="left:731px;top:158px;width:25px;height:15px;background-image:repeating-conic-gradient(#404040 0 25%,#c8c8c8 0 50%);background-size:2px 2px"></div>
<div class="a" style="left:731px;top:173px;width:25px;height:17px;background:#c0c0c0;box-shadow:inset 1px 1px #fff,inset -1px -1px #fff"></div>
<div class="btn" style="left:731px;top:190px;width:25px;height:17px"></div>
<div class="arr" style="left:739px;top:196px;border-top:4px solid #000"></div>

<div class="a" style="left:764px;top:143px;width:55px;height:22px;background:#d8e4f8"></div>
<div class="a" style="left:771px;top:143px;font-size:17.3px;line-height:20px;white-space:nowrap;-webkit-text-stroke:0.35px #000">Point</div>

<div class="lbl" style="left:883px;top:134px">vx</div>
<div class="lbl" style="left:883px;top:150px">vy</div>
<div class="a" style="left:883px;top:166px;width:41px;height:41px;background:#00b400;border:1px solid #000"></div>
<div class="lbl" style="left:883px;top:206px">Gravity</div>

<!-- group box -->
<div class="a" style="left:732px;top:221px;width:151px;height:161px;border:1px solid #ACA899;box-shadow:1px 1px #fff, inset 1px 1px #fff"></div>
<div class="a" style="left:738px;top:215px;width:94px;height:10px;background:#ECE9D8"></div>
<div class="lbl" style="left:740px;top:213px">POINT Parameters</div>
<div class="btn" style="left:739px;top:231px;width:129px;height:24px;padding:1px 0 0 0"><span>UpDate on MouseOver</span></div>
<div class="chk" style="left:739px;top:260px"></div><div class="lbl" style="left:757px;top:259px">Fixed</div>
<div class="chk" style="left:739px;top:284px"></div><div class="lbl" style="left:757px;top:283px">Delaunay</div>
<div class="chk" style="left:739px;top:308px"></div><div class="lbl" style="left:757px;top:307px">Glue</div>
<div class="lbl" style="left:739px;top:327px">Cicle Dynamics</div>
<div class="lbl" style="left:739px;top:342px">Speed</div>
<div class="lbl" style="left:779px;top:342px">Phase</div>
<div class="lbl" style="left:843px;top:342px">FIX</div>
<div class="txt" style="left:739px;top:358px;width:32px;height:18px"><span>0</span></div>
<div class="txt" style="left:779px;top:358px;width:53px;height:19px"><span>0</span></div>
<div class="btn" style="left:815px;top:360px;width:15px;height:15px"></div>
<div class="arr" style="left:818px;top:366px;border-top:4px solid #000"></div>
<div class="txt" style="left:843px;top:358px;width:32px;height:18px"><span>0</span></div>

<div class="lbl" style="left:739px;top:414px">Body Stiffness</div>
<div class="txt" style="left:740px;top:431px;width:62px;height:18px"><span>0,5</span></div>
<div class="btn" style="left:785px;top:433px;width:15px;height:14px"></div>
<div class="arr" style="left:788px;top:438px;border-top:4px solid #000"></div>

<div class="txt" style="left:740px;top:455px;width:183px;height:191px;font-family:'Liberation Mono',monospace;font-size:11.6px;line-height:15px;padding:4px 0 0 3px">Creature N 5 of 6<br>POINTS: 12<br>LINKS: 25</div>

<!-- bottom buttons -->
<div class="btn" style="left:18px;top:614px;width:90px;height:50px"><span>Load Project</span></div>
<div class="btn" style="left:115px;top:614px;width:90px;height:50px"><span>Save Project</span></div>
<div class="btn" style="left:211px;top:614px;width:57px;height:50px;padding:1px 0 0 0"><span>Start Edit<br>NEW<br>Creature</span></div>
<div class="btn" style="left:283px;top:598px;width:97px;height:25px"><span>Load Creature</span></div>
<div class="btn" style="left:283px;top:638px;width:97px;height:25px"><span>Save Creature</span></div>

<div class="lbl" style="left:395px;top:582px">Creature Selector</div>
<div class="a" style="left:395px;top:599px;width:321px;height:79px;background:#d4dee8;border:1px solid #7f9db9;border-bottom-color:#9aa8b8;border-right-color:#303840"></div>
<div class="a" style="left:582px;top:602px;width:67px;height:61px;background:#8282f0"></div>
<svg class="a" id="sel" style="left:396px;top:600px" width="319" height="63" viewBox="396 600 319 63" shape-rendering="crispEdges"><!--SEL-->
<clipPath id="tc0"><rect x="396" y="603" width="44" height="60"/></clipPath>
<rect x="396" y="603" width="44" height="60" fill="#000"/>
<g clip-path="url(#tc0)"><path d="M377 609L393.1 605.2M377 609L389.3 614.2M393.1 605.2L389.3 614.2M393.1 605.2L402.9 623.7M389.3 614.2L405.6 608.2M405.6 608.2L413.2 607.4M405.6 608.2L402.9 623.7M405.6 608.2L416.6 623.4M413.2 607.4L402.9 623.7M413.2 607.4L416.6 623.4M413.2 607.4L426.2 612.9M423.1 603.9L438.6 608.3M423.1 603.9L426.2 612.9M438.6 608.3L426.2 612.9M423.1 603.9L416.6 623.4M402.9 623.7L416.6 623.4M402.9 623.7L403.1 635.9M416.6 623.4L416.8 636.2M402.9 623.7L416.8 636.2M416.6 623.4L403.1 635.9M403.1 635.9L416.8 636.2M403.1 635.9L410 648.7M416.8 636.2L410 648.7" stroke="#ff0000" stroke-width="1" fill="none"/>
<path d="M393.1 605.2L405.6 608.2M389.3 614.2L402.9 623.7M413.2 607.4L423.1 603.9M426.2 612.9L416.6 623.4" stroke="#30f030" stroke-width="1" fill="none"/>
<path d="M374.5 609a2.5 2.5 0 1 0 5 0a2.5 2.5 0 1 0 -5 0M390.6 605.2a2.5 2.5 0 1 0 5 0a2.5 2.5 0 1 0 -5 0M386.8 614.2a2.5 2.5 0 1 0 5 0a2.5 2.5 0 1 0 -5 0M403.1 608.2a2.5 2.5 0 1 0 5 0a2.5 2.5 0 1 0 -5 0M410.7 607.4a2.5 2.5 0 1 0 5 0a2.5 2.5 0 1 0 -5 0M420.6 603.9a2.5 2.5 0 1 0 5 0a2.5 2.5 0 1 0 -5 0M436.1 608.3a2.5 2.5 0 1 0 5 0a2.5 2.5 0 1 0 -5 0M423.7 612.9a2.5 2.5 0 1 0 5 0a2.5 2.5 0 1 0 -5 0M400.4 623.7a2.5 2.5 0 1 0 5 0a2.5 2.5 0 1 0 -5 0M414.1 623.4a2.5 2.5 0 1 0 5 0a2.5 2.5 0 1 0 -5 0M400.6 635.9a2.5 2.5 0 1 0 5 0a2.5 2.5 0 1 0 -5 0M414.3 636.2a2.5 2.5 0 1 0 5 0a2.5 2.5 0 1 0 -5 0M407.5 648.7a2.5 2.5 0 1 0 5 0a2.5 2.5 0 1 0 -5 0" stroke="#ff0000" stroke-width="1.1" fill="none" shape-rendering="auto"/></g>
<clipPath id="tc1"><rect x="445" y="603" width="64" height="60"/></clipPath>
<rect x="445" y="603" width="64" height="60" fill="#000"/>
<g clip-path="url(#tc1)"><path d="M448.9 616.6L459.7 615.8M459.7 615.8L469.2 615.8M469.2 615.8L481.5 616.6M448.9 616.6L448.6 626.4M459.7 615.8L460.3 627.4M469.2 615.8L470.2 627.4M481.5 616.6L482 627.5M448.6 626.4L460.3 627.4M460.3 627.4L470.2 627.4M470.2 627.4L482 627.5M448.9 616.6L460.3 627.4M459.7 615.8L448.6 626.4M459.7 615.8L470.2 627.4M469.2 615.8L460.3 627.4M469.2 615.8L482 627.5M481.5 616.6L470.2 627.4M460.3 627.4L459.8 643.6M470.2 627.4L471.8 643.3M460.3 627.4L471.8 643.3M470.2 627.4L459.8 643.6M448.9 643.6L459.8 643.6M459.8 643.6L471.8 643.3M471.8 643.3L483.9 643.9M448.9 643.6L447.3 656.3M459.8 643.6L460.4 656.3M471.8 643.3L471.1 656.3M483.9 643.9L483.7 656M447.3 656.3L460.4 656.3M460.4 656.3L471.1 656.3M471.1 656.3L483.7 656M448.9 643.6L460.4 656.3M459.8 643.6L447.3 656.3M459.8 643.6L471.1 656.3M471.8 643.3L460.4 656.3M471.8 643.3L483.7 656M483.9 643.9L471.1 656.3" stroke="#ff0000" stroke-width="1" fill="none"/>
<path d="M453.4 605.6L448.9 616.6M453.4 605.6L459.7 615.8M475.6 604.7L469.2 615.8M475.6 604.7L481.5 616.6M447.3 656.3L453.6 665M460.4 656.3L453.6 665M471.1 656.3L477.7 665M483.7 656L477.7 665" stroke="#30f030" stroke-width="1" fill="none"/>
<path d="M450.9 605.6a2.5 2.5 0 1 0 5 0a2.5 2.5 0 1 0 -5 0M473.1 604.7a2.5 2.5 0 1 0 5 0a2.5 2.5 0 1 0 -5 0M446.4 616.6a2.5 2.5 0 1 0 5 0a2.5 2.5 0 1 0 -5 0M457.2 615.8a2.5 2.5 0 1 0 5 0a2.5 2.5 0 1 0 -5 0M466.7 615.8a2.5 2.5 0 1 0 5 0a2.5 2.5 0 1 0 -5 0M479 616.6a2.5 2.5 0 1 0 5 0a2.5 2.5 0 1 0 -5 0M446.1 626.4a2.5 2.5 0 1 0 5 0a2.5 2.5 0 1 0 -5 0M457.8 627.4a2.5 2.5 0 1 0 5 0a2.5 2.5 0 1 0 -5 0M467.7 627.4a2.5 2.5 0 1 0 5 0a2.5 2.5 0 1 0 -5 0M479.5 627.5a2.5 2.5 0 1 0 5 0a2.5 2.5 0 1 0 -5 0M446.4 643.6a2.5 2.5 0 1 0 5 0a2.5 2.5 0 1 0 -5 0M457.3 643.6a2.5 2.5 0 1 0 5 0a2.5 2.5 0 1 0 -5 0M469.3 643.3a2.5 2.5 0 1 0 5 0a2.5 2.5 0 1 0 -5 0M481.4 643.9a2.5 2.5 0 1 0 5 0a2.5 2.5 0 1 0 -5 0M444.8 656.3a2.5 2.5 0 1 0 5 0a2.5 2.5 0 1 0 -5 0M457.9 656.3a2.5 2.5 0 1 0 5 0a2.5 2.5 0 1 0 -5 0M468.6 656.3a2.5 2.5 0 1 0 5 0a2.5 2.5 0 1 0 -5 0M481.2 656a2.5 2.5 0 1 0 5 0a2.5 2.5 0 1 0 -5 0M451.1 665a2.5 2.5 0 1 0 5 0a2.5 2.5 0 1 0 -5 0M475.2 665a2.5 2.5 0 1 0 5 0a2.5 2.5 0 1 0 -5 0" stroke="#ff0000" stroke-width="1.1" fill="none" shape-rendering="auto"/></g>
<clipPath id="tc2"><rect x="514" y="603" width="64" height="60"/></clipPath>
<rect x="514" y="603" width="64" height="60" fill="#000"/>
<g clip-path="url(#tc2)"><path d="M515.3 617.6L523.3 614.2M523.3 614.2L531.1 612.7M531.1 612.7L538.4 610.6M538.4 610.6L540.4 617.3M540.4 617.3L533.8 619.4M533.8 619.4L526.3 621.8M526.3 621.8L518.1 624.8M518.1 624.8L515.3 617.6M515.3 617.6L526.3 621.8M523.3 614.2L518.1 624.8M523.3 614.2L526.3 621.8M523.3 614.2L533.8 619.4M531.1 612.7L526.3 621.8M531.1 612.7L533.8 619.4M531.1 612.7L540.4 617.3M538.4 610.6L533.8 619.4M562.8 610.2L569 610.9M562.8 610.2L562.3 618.8M569 610.9L569.2 619.2M562.3 618.8L569.2 619.2M562.3 618.8L562.3 626.1M569.2 619.2L569 626.8M562.3 626.1L569 626.8M562.8 610.2L569.2 619.2M569 610.9L562.3 618.8M562.3 618.8L569 626.8M569.2 619.2L562.3 626.1" stroke="#ff0000" stroke-width="1" fill="none"/>
<path d="M517.3 609.1L515.3 617.6M517.3 609.1L523.3 614.2M525.8 607.1L523.3 614.2M525.8 607.1L531.1 612.7M533 605.1L531.1 612.7M533 605.1L538.4 610.6M518.1 624.8L524.4 629.7M526.3 621.8L524.4 629.7M526.3 621.8L532.6 627.2M533.8 619.4L532.6 627.2M533.8 619.4L539.6 625M540.4 617.3L539.6 625M554.1 612.9L562.8 610.2M554.1 612.9L562.3 618.8M554.2 622.1L562.3 618.8M554.2 622.1L562.3 626.1M577.5 615.5L569 610.9M577.5 615.5L569.2 619.2M577.5 623.9L569.2 619.2M577.5 623.9L569 626.8" stroke="#30f030" stroke-width="1" fill="none"/>
<path d="M514.8 609.1a2.5 2.5 0 1 0 5 0a2.5 2.5 0 1 0 -5 0M523.3 607.1a2.5 2.5 0 1 0 5 0a2.5 2.5 0 1 0 -5 0M530.5 605.1a2.5 2.5 0 1 0 5 0a2.5 2.5 0 1 0 -5 0M512.8 617.6a2.5 2.5 0 1 0 5 0a2.5 2.5 0 1 0 -5 0M520.8 614.2a2.5 2.5 0 1 0 5 0a2.5 2.5 0 1 0 -5 0M528.6 612.7a2.5 2.5 0 1 0 5 0a2.5 2.5 0 1 0 -5 0M535.9 610.6a2.5 2.5 0 1 0 5 0a2.5 2.5 0 1 0 -5 0M537.9 617.3a2.5 2.5 0 1 0 5 0a2.5 2.5 0 1 0 -5 0M531.3 619.4a2.5 2.5 0 1 0 5 0a2.5 2.5 0 1 0 -5 0M523.8 621.8a2.5 2.5 0 1 0 5 0a2.5 2.5 0 1 0 -5 0M515.6 624.8a2.5 2.5 0 1 0 5 0a2.5 2.5 0 1 0 -5 0M521.9 629.7a2.5 2.5 0 1 0 5 0a2.5 2.5 0 1 0 -5 0M530.1 627.2a2.5 2.5 0 1 0 5 0a2.5 2.5 0 1 0 -5 0M537.1 625a2.5 2.5 0 1 0 5 0a2.5 2.5 0 1 0 -5 0M560.3 610.2a2.5 2.5 0 1 0 5 0a2.5 2.5 0 1 0 -5 0M566.5 610.9a2.5 2.5 0 1 0 5 0a2.5 2.5 0 1 0 -5 0M559.8 618.8a2.5 2.5 0 1 0 5 0a2.5 2.5 0 1 0 -5 0M566.7 619.2a2.5 2.5 0 1 0 5 0a2.5 2.5 0 1 0 -5 0M559.8 626.1a2.5 2.5 0 1 0 5 0a2.5 2.5 0 1 0 -5 0M566.5 626.8a2.5 2.5 0 1 0 5 0a2.5 2.5 0 1 0 -5 0M551.6 612.9a2.5 2.5 0 1 0 5 0a2.5 2.5 0 1 0 -5 0M551.7 622.1a2.5 2.5 0 1 0 5 0a2.5 2.5 0 1 0 -5 0M575 615.5a2.5 2.5 0 1 0 5 0a2.5 2.5 0 1 0 -5 0M575 623.9a2.5 2.5 0 1 0 5 0a2.5 2.5 0 1 0 -5 0" stroke="#ff0000" stroke-width="1.1" fill="none" shape-rendering="auto"/></g>
<clipPath id="tc3"><rect x="585" y="605" width="61" height="58"/></clipPath>
<rect x="585" y="605" width="61" height="58" fill="#000"/>
<g clip-path="url(#tc3)"><path d="M585 622.2L601.8 606.7M585 622.2L610.3 604.6M601.8 606.7L610.3 604.6M601.8 606.7L607.4 623.6M610.3 604.6L622 604.6M610.3 604.6L607.4 623.6M610.3 604.6L623.2 623.6M622 604.6L607.4 623.6M622 604.6L623.2 623.6M622 604.6L635 608.8M622 604.6L646.3 623.8M635 608.8L623.2 623.6M635 608.8L646.3 623.8M585 622.2L607.4 623.6M607.4 623.6L623.2 623.6M623.2 623.6L646.3 623.8" stroke="#ff0000" stroke-width="1" fill="none"/>
<path d="M585 622.2L591 638.4M585 622.2L593.8 638.4M607.4 623.6L591 638.4M607.4 623.6L593.8 638.4M623.2 623.6L633 638.4M623.2 623.6L636.4 638.4M646.3 623.8L633 638.4M646.3 623.8L636.4 638.4" stroke="#30f030" stroke-width="1" fill="none"/>
<path d="M582.5 622.2a2.5 2.5 0 1 0 5 0a2.5 2.5 0 1 0 -5 0M599.3 606.7a2.5 2.5 0 1 0 5 0a2.5 2.5 0 1 0 -5 0M607.8 604.6a2.5 2.5 0 1 0 5 0a2.5 2.5 0 1 0 -5 0M619.5 604.6a2.5 2.5 0 1 0 5 0a2.5 2.5 0 1 0 -5 0M632.5 608.8a2.5 2.5 0 1 0 5 0a2.5 2.5 0 1 0 -5 0M604.9 623.6a2.5 2.5 0 1 0 5 0a2.5 2.5 0 1 0 -5 0M620.8 623.6a2.5 2.5 0 1 0 5 0a2.5 2.5 0 1 0 -5 0M588.5 638.4a2.5 2.5 0 1 0 5 0a2.5 2.5 0 1 0 -5 0M591.3 638.4a2.5 2.5 0 1 0 5 0a2.5 2.5 0 1 0 -5 0M630.5 638.4a2.5 2.5 0 1 0 5 0a2.5 2.5 0 1 0 -5 0M633.9 638.4a2.5 2.5 0 1 0 5 0a2.5 2.5 0 1 0 -5 0" stroke="#ff0000" stroke-width="1.1" fill="none" shape-rendering="auto"/>
<circle cx="646.3" cy="623.8" r="2.5" stroke="#ffff40" fill="none" shape-rendering="auto"/></g>
<clipPath id="tc4"><rect x="652" y="603" width="63" height="60"/></clipPath>
<rect x="652" y="603" width="63" height="60" fill="#000"/>
<g clip-path="url(#tc4)"><path d="M653.4 619.7L659.3 619.7M653.4 625.5L659.3 625.5M653.4 619.7L653.4 625.5M659.3 619.7L659.3 625.5M653.4 619.7L659.3 625.5M659.3 619.7L653.4 625.5M659.3 619.7L665.1 619.7M659.3 625.5L665.1 625.5M659.3 619.7L659.3 625.5M665.1 619.7L665.1 625.5M659.3 619.7L665.1 625.5M665.1 619.7L659.3 625.5M653.4 625.5L659.3 625.5M653.4 631.2L659.3 631.2M653.4 625.5L653.4 631.2M659.3 625.5L659.3 631.2M653.4 625.5L659.3 631.2M659.3 625.5L653.4 631.2M659.3 625.5L665.1 625.5M659.3 631.2L665.1 631.2M659.3 625.5L659.3 631.2M665.1 625.5L665.1 631.2M659.3 625.5L665.1 631.2M665.1 625.5L659.3 631.2M653.4 631.2L659.3 631.2M653.4 637.1L659.3 637.1M653.4 631.2L653.4 637.1M659.3 631.2L659.3 637.1M653.4 631.2L659.3 637.1M659.3 631.2L653.4 637.1M653.4 637.1L659.3 637.1M653.4 642.9L659.3 642.9M653.4 637.1L653.4 642.9M659.3 637.1L659.3 642.9M653.4 637.1L659.3 642.9M659.3 637.1L653.4 642.9M665.1 619.7L671 625.5M665.1 625.5L671 625.5M665.1 631.2L671 625.5M682.8 619.7L688.6 619.7M682.8 625.5L688.6 625.5M682.8 619.7L682.8 625.5M688.6 619.7L688.6 625.5M682.8 619.7L688.6 625.5M688.6 619.7L682.8 625.5M676.9 625.5L682.8 625.5M676.9 631.2L682.8 631.2M676.9 625.5L676.9 631.2M682.8 625.5L682.8 631.2M676.9 625.5L682.8 631.2M682.8 625.5L676.9 631.2M682.8 625.5L688.6 625.5M682.8 631.2L688.6 631.2M682.8 625.5L682.8 631.2M688.6 625.5L688.6 631.2M682.8 625.5L688.6 631.2M688.6 625.5L682.8 631.2M688.6 625.5L694.5 625.5M682.8 631.2L688.6 631.2M682.8 637.1L688.6 637.1M682.8 631.2L682.8 637.1M688.6 631.2L688.6 637.1M682.8 631.2L688.6 637.1M688.6 631.2L682.8 637.1M688.6 631.2L694.5 631.2M688.6 637.1L694.5 637.1M694.5 631.2L694.5 637.1M688.6 631.2L694.5 637.1M694.5 631.2L688.6 637.1M682.8 637.1L688.6 637.1M682.8 642.9L688.6 642.9M682.8 637.1L682.8 642.9M688.6 637.1L688.6 642.9M682.8 637.1L688.6 642.9M688.6 637.1L682.8 642.9M676.9 637.1L682.8 637.1M676.9 625.5L682.8 619.7M694.5 625.5L688.6 619.7M676.9 637.1L682.8 642.9M694.5 637.1L688.6 642.9M706.3 619.7L712.1 619.7M706.3 625.5L712.1 625.5M706.3 619.7L706.3 625.5M712.1 619.7L712.1 625.5M706.3 619.7L712.1 625.5M712.1 619.7L706.3 625.5M700.4 625.5L706.3 625.5M700.4 631.2L706.3 631.2M700.4 625.5L700.4 631.2M706.3 625.5L706.3 631.2M700.4 625.5L706.3 631.2M706.3 625.5L700.4 631.2M706.3 625.5L712.1 625.5M712.1 625.5L718 625.5M700.4 631.2L706.3 631.2M700.4 637.1L706.3 637.1M700.4 631.2L700.4 637.1M706.3 631.2L706.3 637.1M700.4 631.2L706.3 637.1M706.3 631.2L700.4 637.1M706.3 637.1L712.1 637.1M706.3 642.9L712.1 642.9M706.3 637.1L706.3 642.9M712.1 637.1L712.1 642.9M706.3 637.1L712.1 642.9M712.1 637.1L706.3 642.9M712.1 637.1L718 637.1M700.4 625.5L706.3 619.7M712.1 619.7L718 625.5M700.4 637.1L706.3 642.9M718 637.1L712.1 642.9" stroke="#ff0000" stroke-width="1" fill="none"/>
<path d="M658.6 605L653.4 619.7M658.6 605L665.1 619.7M685.4 604.9L682.8 619.7M685.4 604.9L688.6 619.7M708 604.1L706.3 619.7M708 604.1L712.1 619.7" stroke="#30f030" stroke-width="1" fill="none"/>
<path d="M650.9 619.7a2.5 2.5 0 1 0 5 0a2.5 2.5 0 1 0 -5 0M656.8 619.7a2.5 2.5 0 1 0 5 0a2.5 2.5 0 1 0 -5 0M662.6 619.7a2.5 2.5 0 1 0 5 0a2.5 2.5 0 1 0 -5 0M650.9 625.5a2.5 2.5 0 1 0 5 0a2.5 2.5 0 1 0 -5 0M656.8 625.5a2.5 2.5 0 1 0 5 0a2.5 2.5 0 1 0 -5 0M662.6 625.5a2.5 2.5 0 1 0 5 0a2.5 2.5 0 1 0 -5 0M668.5 625.5a2.5 2.5 0 1 0 5 0a2.5 2.5 0 1 0 -5 0M650.9 631.2a2.5 2.5 0 1 0 5 0a2.5 2.5 0 1 0 -5 0M656.8 631.2a2.5 2.5 0 1 0 5 0a2.5 2.5 0 1 0 -5 0M662.6 631.2a2.5 2.5 0 1 0 5 0a2.5 2.5 0 1 0 -5 0M650.9 637.1a2.5 2.5 0 1 0 5 0a2.5 2.5 0 1 0 -5 0M656.8 637.1a2.5 2.5 0 1 0 5 0a2.5 2.5 0 1 0 -5 0M650.9 642.9a2.5 2.5 0 1 0 5 0a2.5 2.5 0 1 0 -5 0M656.8 642.9a2.5 2.5 0 1 0 5 0a2.5 2.5 0 1 0 -5 0M680.3 619.7a2.5 2.5 0 1 0 5 0a2.5 2.5 0 1 0 -5 0M686.1 619.7a2.5 2.5 0 1 0 5 0a2.5 2.5 0 1 0 -5 0M674.4 625.5a2.5 2.5 0 1 0 5 0a2.5 2.5 0 1 0 -5 0M680.3 625.5a2.5 2.5 0 1 0 5 0a2.5 2.5 0 1 0 -5 0M686.1 625.5a2.5 2.5 0 1 0 5 0a2.5 2.5 0 1 0 -5 0M692 625.5a2.5 2.5 0 1 0 5 0a2.5 2.5 0 1 0 -5 0M674.4 631.2a2.5 2.5 0 1 0 5 0a2.5 2.5 0 1 0 -5 0M680.3 631.2a2.5 2.5 0 1 0 5 0a2.5 2.5 0 1 0 -5 0M686.1 631.2a2.5 2.5 0 1 0 5 0a2.5 2.5 0 1 0 -5 0M692 631.2a2.5 2.5 0 1 0 5 0a2.5 2.5 0 1 0 -5 0M674.4 637.1a2.5 2.5 0 1 0 5 0a2.5 2.5 0 1 0 -5 0M680.3 637.1a2.5 2.5 0 1 0 5 0a2.5 2.5 0 1 0 -5 0M686.1 637.1a2.5 2.5 0 1 0 5 0a2.5 2.5 0 1 0 -5 0M692 637.1a2.5 2.5 0 1 0 5 0a2.5 2.5 0 1 0 -5 0M680.3 642.9a2.5 2.5 0 1 0 5 0a2.5 2.5 0 1 0 -5 0M686.1 642.9a2.5 2.5 0 1 0 5 0a2.5 2.5 0 1 0 -5 0M703.8 619.7a2.5 2.5 0 1 0 5 0a2.5 2.5 0 1 0 -5 0M709.6 619.7a2.5 2.5 0 1 0 5 0a2.5 2.5 0 1 0 -5 0M697.9 625.5a2.5 2.5 0 1 0 5 0a2.5 2.5 0 1 0 -5 0M703.8 625.5a2.5 2.5 0 1 0 5 0a2.5 2.5 0 1 0 -5 0M709.6 625.5a2.5 2.5 0 1 0 5 0a2.5 2.5 0 1 0 -5 0M715.5 625.5a2.5 2.5 0 1 0 5 0a2.5 2.5 0 1 0 -5 0M697.9 631.2a2.5 2.5 0 1 0 5 0a2.5 2.5 0 1 0 -5 0M703.8 631.2a2.5 2.5 0 1 0 5 0a2.5 2.5 0 1 0 -5 0M697.9 637.1a2.5 2.5 0 1 0 5 0a2.5 2.5 0 1 0 -5 0M703.8 637.1a2.5 2.5 0 1 0 5 0a2.5 2.5 0 1 0 -5 0M709.6 637.1a2.5 2.5 0 1 0 5 0a2.5 2.5 0 1 0 -5 0M715.5 637.1a2.5 2.5 0 1 0 5 0a2.5 2.5 0 1 0 -5 0M703.8 642.9a2.5 2.5 0 1 0 5 0a2.5 2.5 0 1 0 -5 0M709.6 642.9a2.5 2.5 0 1 0 5 0a2.5 2.5 0 1 0 -5 0" stroke="#ff0000" stroke-width="1.1" fill="none" shape-rendering="auto"/>
<path d="M655.6 602l6 6M655.6 608l6 -6M682.4 601.9l6 6M682.4 607.9l6 -6M705 601.1l6 6M705 607.1l6 -6" stroke="#ff0000" stroke-width="1" fill="none"/></g>
<!--/SEL--></svg>
<!-- hscroll -->
<div class="a" style="left:396px;top:663px;width:319px;height:13px;background:#ECE9D8"></div>
<div class="btn" style="left:396px;top:663px;width:17px;height:13px"></div>
<div class="arr" style="left:401px;top:665px;border:4px solid transparent;border-right:4px solid #000;border-left:0;height:8px"></div>
<div class="a" style="left:413px;top:663px;width:96px;height:13px;background:#c0c0c0;box-shadow:inset 1px 1px #fff"></div>
<div class="btn" style="left:697px;top:663px;width:17px;height:13px"></div>
<div class="arr" style="left:704px;top:665px;border:4px solid transparent;border-left:4px solid #000;border-right:0;height:8px"></div>
</body></html>
